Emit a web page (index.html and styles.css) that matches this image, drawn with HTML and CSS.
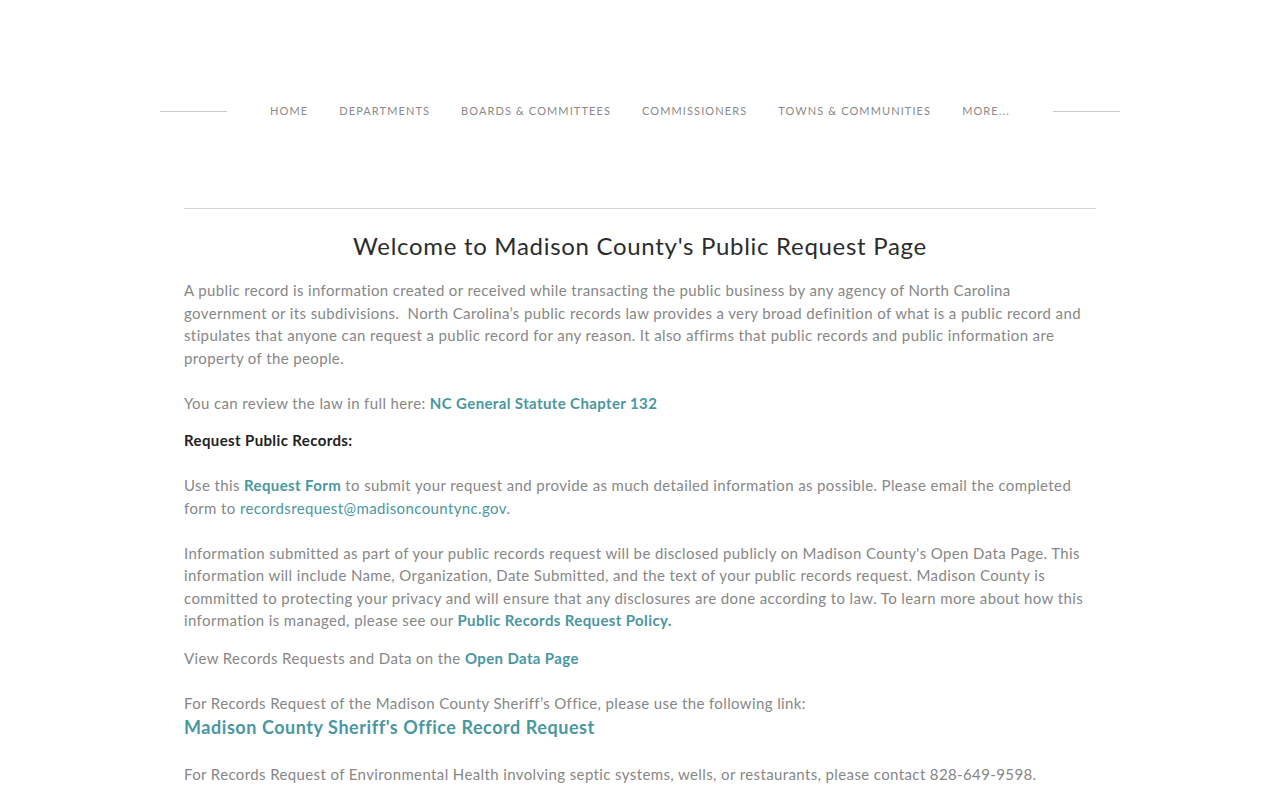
FILE: index.html
```html
<!DOCTYPE html>
<html>
<head>
<meta charset="utf-8">
<link rel="stylesheet" href="styles.css">
</head>
<body>
<header class="header">
  <div class="nav-wrap">
    <span class="nav-line"></span>
    <nav class="nav">
      <a href="#">Home</a>
      <a href="#">Departments</a>
      <a href="#">Boards &amp; Committees</a>
      <a href="#">Commissioners</a>
      <a href="#">Towns &amp; Communities</a>
      <a href="#">More...</a>
    </nav>
    <span class="nav-line"></span>
  </div>
</header>
<main class="content">
  <hr class="divider">
  <h2 class="title">Welcome to Madison County's Public Request Page</h2>
  <div class="para">A public record is information created or received while transacting the public business by any agency of North Carolina government or its subdivisions.&nbsp; North Carolina’s public records law provides a very broad definition of what is a public record and stipulates that anyone can request a public record for any reason. It also affirms that public records and public information are property of the people.<br><br>You can review the law in full here: <a class="link" href="#">NC General Statute Chapter 132</a></div>
  <div class="para"><strong class="dark">Request Public Records:</strong><br><br>Use this <a class="link" href="#">Request Form</a> to submit your request and provide as much detailed information as possible. Please email the completed form to <a class="link-plain" href="#">recordsrequest@madisoncountync.gov</a>.<br><br>Information submitted as part of your public records request will be disclosed publicly on Madison County's Open Data Page. This information will include Name, Organization, Date Submitted, and the text of your public records request. Madison County is committed to protecting your privacy and will ensure that any disclosures are done according to law. To learn more about how this information is managed, please see our <a class="link" href="#">Public Records Request Policy.</a></div>
  <div class="para para-gap">View Records Requests and Data on the <a class="link" href="#">Open Data Page</a><br><br>For Records Request of the Madison County Sheriff’s Office, please use the following link:<br><a class="link big" href="#">Madison County Sheriff's Office Record Request</a></div>
  <div class="para">For Records Request of Environmental Health involving septic systems, wells, or restaurants, please contact 828-649-9598.</div>
</main>
</body>
</html>
```
FILE: styles.css
```css
html, body {
  margin: 0;
  padding: 0;
  background: #fff;
}
body {
  font-family: Lato, "Open Sans", sans-serif;
  color: #878787;
}
.header {
  padding-top: 101px;
  height: 108px;
  box-sizing: border-box;
}
.nav-wrap {
  width: 960px;
  margin: 0 auto;
  display: flex;
  align-items: center;
  justify-content: space-between;
}
.nav-line {
  display: block;
  width: 67px;
  height: 1px;
  background: #c8c8c8;
}
.nav {
  display: flex;
  gap: 31px;
}
.nav a {
  font-size: 11px;
  letter-spacing: 1.1px;
  text-transform: uppercase;
  color: #8a8a8a;
  text-decoration: none;
  line-height: 20px;
}
.content {
  width: 912px;
  margin: 0 auto;
  padding-top: 100px;
}
.divider {
  border: 0;
  height: 1px;
  background: #d4d4d4;
  margin: 0;
}
.title {
  margin: 22px 0 18px;
  font-weight: 400;
  font-size: 24px;
  letter-spacing: 0.7px;
  line-height: 30px;
  text-align: center;
  color: #2c2c2c;
}
.para {
  font-size: 15px;
  letter-spacing: 0.38px;
  line-height: 22.5px;
  margin-bottom: 15px;
}
.para-gap {
  margin-bottom: 22px;
}
.link {
  color: #4a97a0;
  font-weight: 700;
  text-decoration: none;
}
.link-plain {
  color: #4a97a0;
  text-decoration: none;
}
.dark {
  color: #222;
  font-weight: 700;
}
.big {
  font-size: 18px;
  letter-spacing: 0.55px;
  line-height: 27px;
}
```
